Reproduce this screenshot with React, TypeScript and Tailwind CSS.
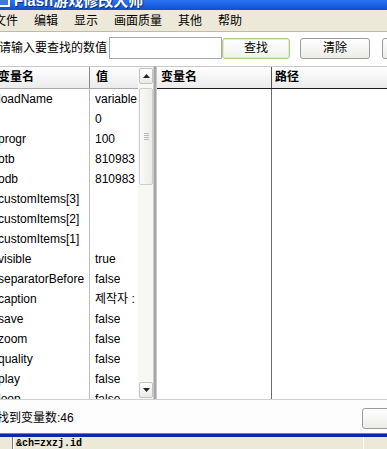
import React from "react";

const rows: [string, string][] = [
  ["loadName", "variable"],
  ["", "0"],
  ["progr", "100"],
  ["otb", "810983"],
  ["odb", "810983"],
  ["customItems[3]", ""],
  ["customItems[2]", ""],
  ["customItems[1]", ""],
  ["visible", "true"],
  ["separatorBefore", "false"],
  ["caption", "제작자 : "],
  ["save", "false"],
  ["zoom", "false"],
  ["quality", "false"],
  ["play", "false"],
  ["loop", "false"],
];

const menus = ["文件", "编辑", "显示", "画面质量", "其他", "帮助"];

function Arrow({ up }: { up?: boolean }) {
  return (
    <svg width="7" height="4" viewBox="0 0 7 4">
      <path d={up ? "M0 4 L3.5 0 L7 4 Z" : "M0 0 L3.5 4 L7 0 Z"} fill="#222" />
    </svg>
  );
}

export default function App() {
  return (
    <div className="w-[387px] h-[449px] overflow-hidden bg-white text-black text-[12px] font-['Liberation_Sans','Noto_Sans_CJK_SC','Noto_Sans_CJK_KR',sans-serif]">
      {/* title bar */}
      <div className="h-[10px] overflow-hidden flex bg-gradient-to-b from-[#2a74f2] to-[#0b50d8]">
        <div className="-ml-[4px] mt-[-7px] w-[14px] h-[14px] border-2 border-white bg-[#3a7be0]" />
        <div className="ml-[4px] -mt-[8px] leading-[18px] text-[15px] font-bold text-white [text-shadow:1px_1px_0_#0a2a80]">
          Flash游戏修改大师
        </div>
      </div>

      {/* menu */}
      <div className="h-[22px] flex items-center bg-[#ECE9D8] border-b border-[#bdbab0]">
        <div className="flex -ml-[14px]">
          {menus.map((m) => (
            <div key={m} className="px-[8px] leading-[20px]">
              {m}
            </div>
          ))}
        </div>
      </div>

      {/* toolbar */}
      <div className="h-[32px] flex items-center whitespace-nowrap overflow-hidden">
        <div className="-ml-[1px] w-[108px] shrink-0">请输入要查找的数值</div>
        <div className="ml-[2px] w-[113px] h-[22px] shrink-0 border border-[#a4abb3] bg-white" />
        <button className="w-[68px] h-[21px] shrink-0 rounded-[3px] border border-[#a8cf8c] bg-gradient-to-b from-white to-[#eef3ea] shadow-[inset_0_0_0_1px_#dcefcf]">
          查找
        </button>
        <button className="ml-[10px] w-[70px] h-[21px] shrink-0 rounded-[3px] border border-[#9b9b9b] bg-gradient-to-b from-white to-[#ebebe7]">
          清除
        </button>
        <button className="ml-[12px] w-[70px] h-[21px] shrink-0 rounded-[3px] border border-[#9b9b9b] bg-gradient-to-b from-white to-[#ebebe7]" />
      </div>

      {/* lists */}
      <div className="mt-[2px] h-[334px] flex border-b border-[#cfcfcf]">
        {/* left list */}
        <div className="w-[153px] flex border-t border-[#c8c8c8]">
          <div className="flex-1 overflow-hidden">
            <div className="-ml-[4px] w-[142px] whitespace-nowrap">
              <div className="h-[22px] flex font-bold bg-gradient-to-b from-white to-[#ebebeb] border-b border-[#a8a8a8]">
                <div className="w-[94px] pl-[2px] leading-[21px] border-r border-[#8a8a8a]">变量名</div>
                <div className="pl-[6px] leading-[21px]">值</div>
              </div>
              {rows.map(([n, v], i) => (
                <div key={i} className="h-[20px] flex">
                  <div className="w-[94px] shrink-0 pl-[2px] leading-[20px] border-r border-[#bdbdbd] overflow-hidden">
                    {n}
                  </div>
                  <div className="pl-[5px] leading-[20px] overflow-hidden">{v}</div>
                </div>
              ))}
            </div>
          </div>
          {/* scrollbar */}
          <div className="w-[15px] flex flex-col bg-[#f7f7f4]">
            <div className="mt-[1px] ml-[1px] w-[14px] h-[16px] rounded-[2px] border border-[#c2c2c2] bg-gradient-to-b from-white to-[#e9e9e6] flex items-center justify-center">
              <Arrow up />
            </div>
            <div className="mt-[4px] ml-[1px] w-[14px] h-[97px] rounded-[2px] border border-[#cdcdcd] bg-gradient-to-r from-[#fafafa] to-[#ececea] flex flex-col items-center justify-center gap-[1px]">
              <div className="w-[5px] h-[1px] bg-[#b9b9b9]" />
              <div className="w-[5px] h-[1px] bg-[#b9b9b9]" />
              <div className="w-[5px] h-[1px] bg-[#b9b9b9]" />
              <div className="w-[5px] h-[1px] bg-[#b9b9b9]" />
            </div>
            <div className="flex-1" />
            <div className="mb-[1px] ml-[1px] w-[14px] h-[16px] rounded-[2px] border border-[#c2c2c2] bg-gradient-to-b from-white to-[#e9e9e6] flex items-center justify-center">
              <Arrow />
            </div>
          </div>
        </div>

        {/* splitter */}
        <div className="w-[4px] bg-[#a6a6a6] border-x border-[#c8c8c8]" />

        {/* right list */}
        <div className="flex-1 flex flex-col border-t border-[#c8c8c8]">
          <div className="h-[22px] flex font-bold bg-gradient-to-b from-white to-[#ebebeb] border-b border-[#1e1e1e]">
            <div className="w-[115px] pl-[4px] leading-[21px] border-r border-[#555]">变量名</div>
            <div className="pl-[3px] leading-[21px]">路径</div>
          </div>
          <div className="flex-1 flex">
            <div className="w-[115px] border-r border-[#6a6a6a]" />
            <div className="flex-1" />
          </div>
        </div>
      </div>

      {/* status */}
      <div className="h-[33px] flex items-center overflow-hidden bg-[#fdfdfd]">
        <div className="-ml-[3px] w-[365px] shrink-0 pt-[2px]">找到变量数:46</div>
        <div className="mt-[3px] w-[70px] h-[21px] shrink-0 rounded-[3px] border border-[#9b9b9b] bg-gradient-to-b from-white to-[#ebebe7]" />
      </div>

      {/* blue line */}
      <div className="h-[4px] bg-[#0a28a8] border-t border-[#5c82dc]" />

      {/* bottom strip */}
      <div className="h-[12px] flex bg-[#ECE9D8] overflow-hidden">
        <div className="w-[13px] shrink-0 border-r border-[#7a7a7a]" />
        <div className="w-[351px] shrink-0 border-l border-[#ffffff] border-r border-[#a0a0a0] pl-[2px] font-['Liberation_Mono',monospace] text-[10px] font-bold leading-[14px]">
          &amp;ch=zxzj.id
        </div>
      </div>
    </div>
  );
}
